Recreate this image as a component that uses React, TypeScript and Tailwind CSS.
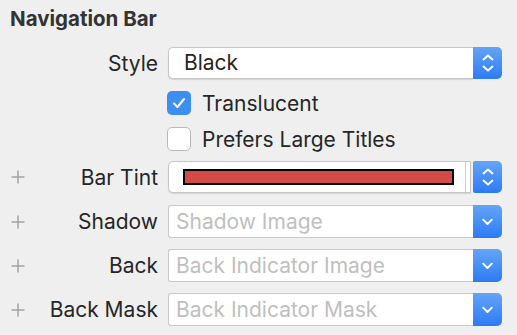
import React from 'react';

const font = { fontFamily: 'Inter, "Noto Sans", sans-serif' };

const Plus = () => (
  <svg width="14" height="14" viewBox="0 0 14 14" className="shrink-0">
    <path d="M7 0.5V13.5M0.5 7H13.5" stroke="#a3a3a3" strokeWidth="1.5" />
  </svg>
);

const Stepper = () => (
  <svg width="12" height="20" viewBox="0 0 12 20">
    <path d="M1.5 6.5L6 2.5L10.5 6.5M1.5 13.5L6 17.5L10.5 13.5" fill="none" stroke="#fff" strokeWidth="1.8" strokeLinecap="round" strokeLinejoin="round" />
  </svg>
);

const ChevronDown = () => (
  <svg width="11" height="8" viewBox="0 0 11 8">
    <path d="M1.2 1.7L5.5 6L9.8 1.7" fill="none" stroke="#fff" strokeWidth="1.9" strokeLinecap="round" strokeLinejoin="round" />
  </svg>
);

const Row: React.FC<{ label: string; plus?: boolean; className?: string; children: React.ReactNode }> = ({ label, plus, className, children }) => (
  <div className={`flex items-center ${className ?? ''}`}>
    <div className="w-[158px] flex items-center pl-[11px]">
      {plus ? <Plus /> : <span className="w-[14px]" />}
      <span className="flex-1 text-right text-[21px] leading-none text-[#262626]">{label}</span>
    </div>
    <div className="ml-[10px] w-[334px] h-full flex">{children}</div>
  </div>
);

const BlueButton: React.FC<{ children: React.ReactNode; className?: string }> = ({ children, className }) => (
  <div className={`w-[29px] h-full flex items-center justify-center bg-gradient-to-b from-[#64a4f7] to-[#2c7bf5] ${className ?? ''}`}>
    {children}
  </div>
);

const ComboBox: React.FC<{ placeholder: string }> = ({ placeholder }) => (
  <>
    <div className="flex-1 h-full bg-white border border-[#c9c9c9] border-r-0 rounded-l-[3px] flex items-center pl-[7px] text-[21px] text-[#bfbfbf]">
      {placeholder}
    </div>
    <BlueButton className="rounded-r-[5px]">
      <ChevronDown />
    </BlueButton>
  </>
);

const CheckRow: React.FC<{ label: string; checked?: boolean; className?: string }> = ({ label, checked, className }) => (
  <div className={`flex items-center h-[24px] pl-[167px] ${className ?? ''}`}>
    {checked ? (
      <div className="w-[24px] h-[24px] rounded-[5px] bg-[#3c8ff0] flex items-center justify-center">
        <svg width="14" height="12" viewBox="0 0 14 12">
          <path d="M2 6.5L5.5 10L12 2" fill="none" stroke="#fff" strokeWidth="2" strokeLinecap="round" strokeLinejoin="round" />
        </svg>
      </div>
    ) : (
      <div className="w-[24px] h-[24px] rounded-[5px] bg-white border border-[#b9b9b9]" />
    )}
    <span className="ml-[11px] text-[21px] leading-none text-[#262626]">{label}</span>
  </div>
);

export default function App() {
  return (
    <div className="w-[517px] h-[335px] bg-[#efefef] overflow-hidden" style={font}>
      <div className="h-[47px] pt-[7px] pl-[10px]">
        <h2 className="text-[20.5px] leading-[24px] font-bold text-[#333333]">Navigation Bar</h2>
      </div>

      <Row label="Style" className="h-[32px]">
        <div className="flex-1 h-full bg-white border border-[#c6c6c6] border-r-0 rounded-l-[5px] shadow-[0_1px_1px_rgba(0,0,0,0.12)] flex items-center pl-[15px] text-[21px] text-[#262626]">
          Black
        </div>
        <BlueButton className="rounded-r-[5px]">
          <Stepper />
        </BlueButton>
      </Row>

      <CheckRow label="Translucent" checked className="mt-[12px]" />
      <CheckRow label="Prefers Large Titles" className="mt-[12px]" />

      <Row label="Bar Tint" plus className="h-[32px] mt-[10px]">
        <div className="flex-1 h-full bg-white border border-[#c6c6c6] rounded-l-[5px] shadow-[0_1px_1px_rgba(0,0,0,0.12)] flex items-center pl-[14px] pr-[4px]">
          <div className="flex-1 h-[16px] bg-[#d44a48] border-2 border-black" />
          <div className="ml-[11px] w-px h-full bg-[#d0d0d0]" />
        </div>
        <BlueButton className="ml-[2px] rounded-[5px] rounded-l-[2px]">
          <Stepper />
        </BlueButton>
      </Row>

      <Row label="Shadow" plus className="h-[33px] mt-[12px]">
        <ComboBox placeholder="Shadow Image" />
      </Row>
      <Row label="Back" plus className="h-[33px] mt-[11px]">
        <ComboBox placeholder="Back Indicator Image" />
      </Row>
      <Row label="Back Mask" plus className="h-[33px] mt-[11px]">
        <ComboBox placeholder="Back Indicator Mask" />
      </Row>
    </div>
  );
}
